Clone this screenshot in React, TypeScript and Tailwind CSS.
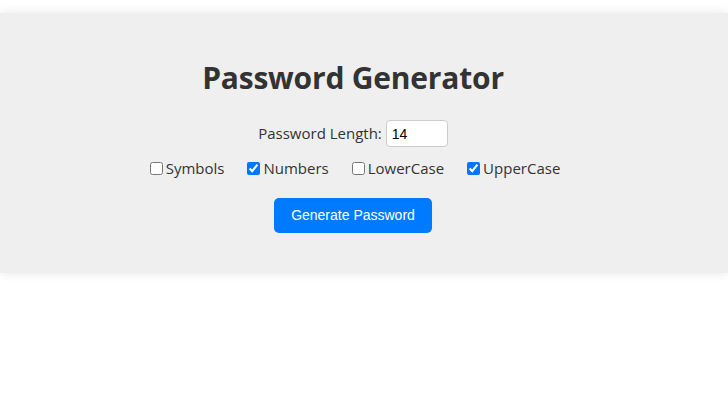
import React from "react";

export default function App() {
  const font = { fontFamily: '"Open Sans", "Noto Sans", sans-serif' };
  return (
    <div className="w-[728px] h-[420px] bg-white overflow-hidden" style={font}>
      <div className="mt-[13px] h-[260px] bg-[#efefef] shadow-[0_0_10px_rgba(0,0,0,0.1)] flex flex-col items-center pt-[45px] pr-[22px] text-[#333]">
        <h1 className="text-[30px] leading-[40px] font-bold text-[#333] tracking-[-0.2px]">Password Generator</h1>
        <div className="mt-[22px] h-[27px] flex items-center text-[15px] text-[#333]">
          <span>Password Length:</span>
          <input
            type="number"
            defaultValue={14}
            className="ml-[4px] w-[62px] h-[27px] bg-white border border-[#ccc] rounded-[4px] px-[5px] text-[14px] text-black outline-none [appearance:textfield] [&::-webkit-inner-spin-button]:appearance-none"
            style={{ fontFamily: '"Liberation Sans", Arial, sans-serif' }}
          />
        </div>
        <div className="mt-[9px] h-[24px] flex items-center text-[15px] text-[#333] pl-[4px]">
          {[
            ["Symbols", false],
            ["Numbers", true],
            ["LowerCase", false],
            ["UpperCase", true],
          ].map(([label, checked], i) => (
            <label key={i} className={`flex items-center ${i < 3 ? "mr-[23px]" : ""}`}>
              <input type="checkbox" defaultChecked={checked as boolean} className="w-[13px] h-[13px] m-0 mr-[3px] accent-[#0075ff]" />
              <span>{label as string}</span>
            </label>
          ))}
        </div>
        <button
          className="mt-[18px] w-[158px] h-[35px] bg-[#007bff] text-white text-[14px] rounded-[5px]"
          style={{ fontFamily: '"Liberation Sans", Arial, sans-serif' }}
        >
          Generate Password
        </button>
      </div>
    </div>
  );
}
